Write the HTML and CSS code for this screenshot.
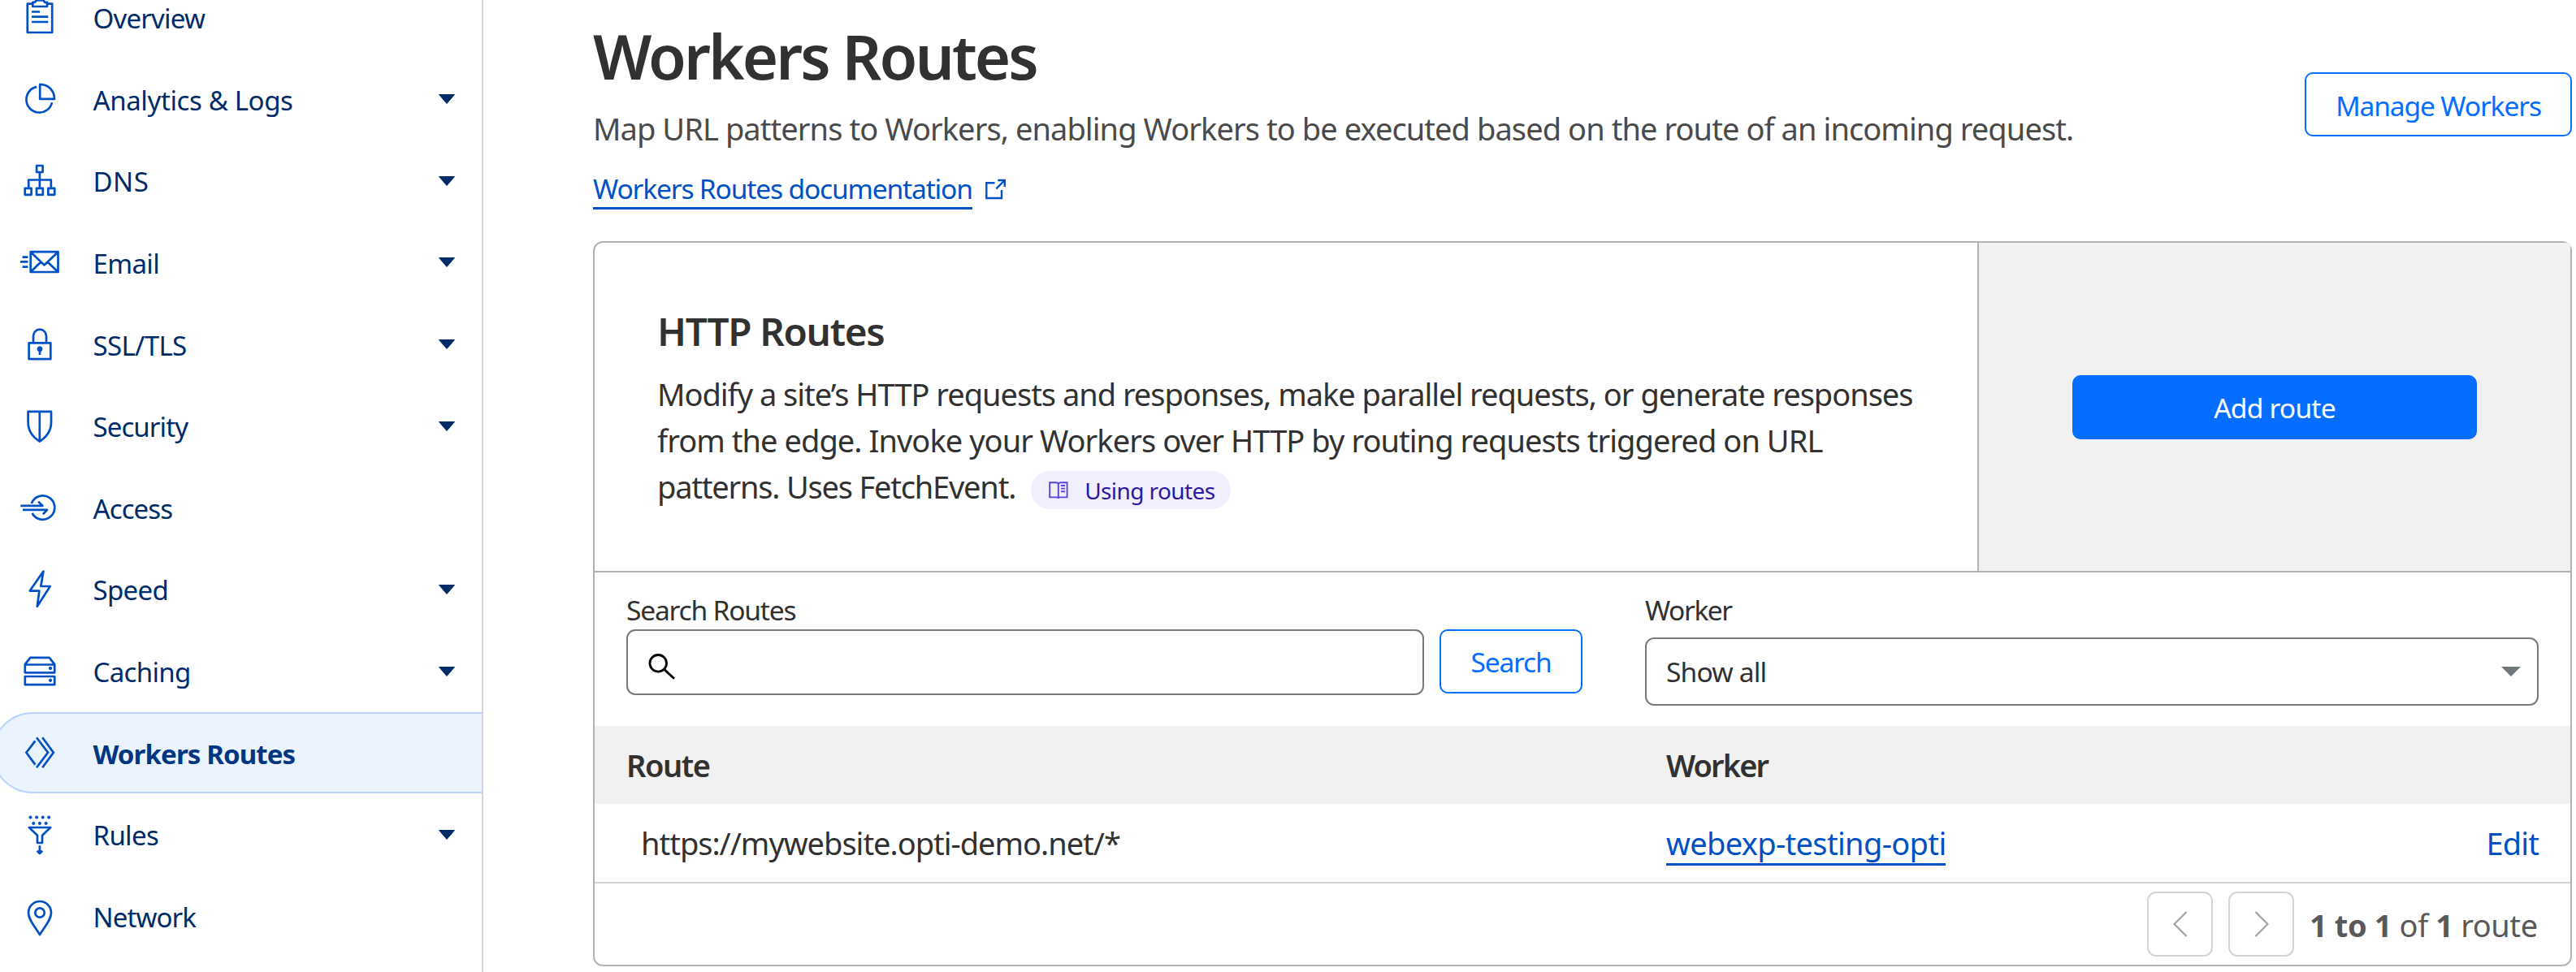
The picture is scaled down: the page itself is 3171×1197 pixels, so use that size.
FILE: index.html
```
<!DOCTYPE html>
<html lang="en">
<head>
<meta charset="utf-8">
<title>Workers Routes</title>
<link rel="stylesheet" href="styles.css">
</head>
<body>
<div class="app">
  <nav class="sidebar">
    <a class="nav-item t-overview">
      <svg class="nav-icon" viewBox="0 0 60 60"><path d="M20 12.7H14.8V48H45.2V12.7H40"/><path d="M21.3 10.8H24L25.5 8.5H34.5L36 10.8H39V16H21.3Z"/><path d="M20 22.5H30M20 28.7H40.3M20 35H40.3"/></svg>
      <span class="nav-label">Overview</span>
    </a>
    <a class="nav-item t-analytics">
      <svg class="nav-icon" viewBox="0 0 60 60"><path d="M30.2 11.8V29.9H48C48 20 41 12 30.2 11.8Z"/><path d="M26.2 14.9A16 16 0 1 0 45 34.2"/></svg>
      <span class="nav-label">Analytics &amp; Logs</span>
      <svg class="caret" viewBox="0 0 20 12"><path d="M.5.5H19.5L10 11.5Z"/></svg>
    </a>
    <a class="nav-item t-dns">
      <svg class="nav-icon" viewBox="0 0 60 60"><path d="M26.1 11H33.6V19H26.1ZM11.7 38.8H19.6V46.8H11.7ZM26 38.8H33.8V46.8H26ZM40.3 38.8H48.2V46.8H40.3ZM29.9 19V38.5M16.2 38.5V28.5H43.8V38.5"/></svg>
      <span class="nav-label">DNS</span>
      <svg class="caret" viewBox="0 0 20 12"><path d="M.5.5H19.5L10 11.5Z"/></svg>
    </a>
    <a class="nav-item t-email">
      <svg class="nav-icon" viewBox="0 0 60 60"><path d="M18.7 17.2H52.5V42H18.7ZM18.7 17.2L35.4 33.4L52.5 17.2M18.7 42L31.4 29.5M52.5 42L39.5 29.5M8.6 23.6H15.4M5.9 29.3H15.4M8.6 35.6H15.4"/></svg>
      <span class="nav-label">Email</span>
      <svg class="caret" viewBox="0 0 20 12"><path d="M.5.5H19.5L10 11.5Z"/></svg>
    </a>
    <a class="nav-item t-ssl">
      <svg class="nav-icon" viewBox="0 0 60 60"><path d="M16.6 28.3H43.3V48.2H16.6ZM22 28V20A8 8.4 0 0 1 38 20V28"/><circle class="solid" cx="30" cy="35.8" r="3"/><path d="M30 36V43"/></svg>
      <span class="nav-label">SSL/TLS</span>
      <svg class="caret" viewBox="0 0 20 12"><path d="M.5.5H19.5L10 11.5Z"/></svg>
    </a>
    <a class="nav-item t-security">
      <svg class="nav-icon" viewBox="0 0 60 60"><path d="M15.6 11.8H44V25C44 36 38.5 43 29.8 48.6C21 43 15.6 36 15.6 25ZM29.8 12V48"/></svg>
      <span class="nav-label">Security</span>
      <svg class="caret" viewBox="0 0 20 12"><path d="M.5.5H19.5L10 11.5Z"/></svg>
    </a>
    <a class="nav-item t-access">
      <svg class="nav-icon" viewBox="0 0 60 60"><path d="M19.8 25A14.7 14.7 0 1 1 20.6 37M6.3 27.9H33.4L28.1 22.8M9 32.8H39L33.9 38.4"/></svg>
      <span class="nav-label">Access</span>
    </a>
    <a class="nav-item t-speed">
      <svg class="nav-icon" viewBox="0 0 60 60"><path d="M34.4 7.5L17.8 31.6H29.4L26.8 50.8L42.7 26H31.3Z"/></svg>
      <span class="nav-label">Speed</span>
      <svg class="caret" viewBox="0 0 20 12"><path d="M.5.5H19.5L10 11.5Z"/></svg>
    </a>
    <a class="nav-item t-caching">
      <svg class="nav-icon" viewBox="0 0 60 60"><path d="M11.8 21.5H48.2V31.3H11.8ZM11.8 36H48.2V46.2H11.8ZM11.8 21.2L18.3 12.8H41.7L48.2 21.2"/><circle class="solid" cx="43" cy="26" r="1.7"/><circle class="solid" cx="43" cy="40.8" r="1.7"/></svg>
      <span class="nav-label">Caching</span>
      <svg class="caret" viewBox="0 0 20 12"><path d="M.5.5H19.5L10 11.5Z"/></svg>
    </a>
    <a class="nav-item active t-routes">
      <svg class="nav-icon miter" viewBox="0 0 60 60"><path d="M24.4 15.4L13.4 29.8L24.4 44.6M26 11.2L40 29.8L26 48.2M33.2 11.2L46.8 29.8L33.2 48.2"/></svg>
      <span class="nav-label">Workers Routes</span>
    </a>
    <a class="nav-item t-rules">
      <svg class="nav-icon" viewBox="0 0 60 60"><path d="M16.8 21H43.2L33 30.8V40H27V30.8ZM29.9 43.2V52.5M26.7 49.7L29.9 53L33.1 49.7"/><g class="solid"><circle cx="18.5" cy="8.5" r="1.6"/><circle cx="26.1" cy="8.5" r="1.6"/><circle cx="33.7" cy="8.5" r="1.6"/><circle cx="41.2" cy="8.5" r="1.6"/><circle cx="22.3" cy="15.9" r="1.6"/><circle cx="29.9" cy="15.9" r="1.6"/><circle cx="37.6" cy="15.9" r="1.6"/></g></svg>
      <span class="nav-label">Rules</span>
      <svg class="caret" viewBox="0 0 20 12"><path d="M.5.5H19.5L10 11.5Z"/></svg>
    </a>
    <a class="nav-item t-network">
      <svg class="nav-icon" viewBox="0 0 60 60"><path d="M30 53C24 43 16 35 16 26A14 14 0 0 1 44 26C44 35 36 43 30 53Z"/><circle cx="30" cy="26" r="5.7"/></svg>
      <span class="nav-label">Network</span>
    </a>
  </nav>

  <main class="main">
    <header class="page-head">
      <div>
        <h1 class="title">Workers Routes</h1>
        <p class="subtitle">Map URL patterns to Workers, enabling Workers to be executed based on the route of an incoming request.</p>
        <div class="doc-row">
          <a class="link doc-link">Workers Routes documentation</a>
          <svg class="external" viewBox="0 0 26 26"><path d="M11.5 5.3H1.3V24H20V14M15.3 2H23.8V10M23.8 2L13.3 12.3"/></svg>
        </div>
      </div>
      <button class="btn btn-outline manage">Manage Workers</button>
    </header>

    <section class="card">
      <div class="intro">
        <div class="intro-text">
          <h2 class="heading">HTTP Routes</h2>
          <p class="copy"><span class="l1">Modify a site’s HTTP requests and responses, make parallel requests, or generate responses</span><br><span class="l2">from the edge. Invoke your Workers over HTTP by routing requests triggered on URL</span><br><span class="l3">patterns. Uses FetchEvent.</span><a class="badge"><svg class="book" viewBox="0 0 24 22"><path d="M11.8 3Q11 1.2 9 1.2H1.2V19.4H9.5Q11.8 19.4 11.8 21Q11.8 19.4 14 19.4H22.6V1.2H14.5Q12.5 1.2 11.8 3ZM11.8 3V20.5M15 5H20M15 8.6H20M15 12.2H20"/></svg><span>Using routes</span></a></p>
        </div>
        <div class="intro-action">
          <button class="btn btn-primary">Add route</button>
        </div>
      </div>

      <div class="filters">
        <div class="field">
          <label class="label search-label">Search Routes</label>
          <div class="search-row">
            <div class="input">
              <svg class="magnifier" viewBox="0 0 34 32"><ellipse cx="12.2" cy="11.8" rx="10.3" ry="10.3"/><path d="M19.6 19.4L32 30.8"/></svg>
            </div>
            <button class="btn btn-outline search">Search</button>
          </div>
        </div>
        <div class="field">
          <label class="label worker-label">Worker</label>
          <div class="select"><span>Show all</span><svg class="select-arrow" viewBox="0 0 24 12"><path d="M0 0H24L12 12Z"/></svg></div>
        </div>
      </div>

      <div class="row row-head"><span class="th-route">Route</span><span class="th-worker">Worker</span></div>
      <div class="row row-body">
        <span class="url">https://mywebsite.opti-demo.net/*</span>
        <span><a class="link worker-link">webexp-testing-opti</a></span>
        <a class="edit">Edit</a>
      </div>
      <div class="pager">
        <button class="page-btn"><svg viewBox="0 0 18 32"><path d="M16.5 1L1.5 16L16.5 31"/></svg></button>
        <button class="page-btn"><svg viewBox="0 0 18 32"><path d="M1.5 1L16.5 16L1.5 31"/></svg></button>
        <span class="count"><b>1 to 1</b> of <b>1</b> route</span>
      </div>
    </section>
  </main>
</div>
</body>
</html>
```
FILE: styles.css
```
* { box-sizing: border-box; }

body {
  margin: 0;
  background: #fff;
  color: #313131;
  font-family: "Noto Sans", "Open Sans", sans-serif;
  font-size: 38px;
  overflow: hidden;
}

h1, h2, p { margin: 0; }
button { font-family: inherit; margin: 0; padding: 0; }
svg { display: block; flex: none; fill: none; }

.app { display: flex; height: 1197px; overflow: hidden; }

/* Sidebar */
.sidebar {
  flex: none;
  width: 595px;
  height: 1240px;
  margin-top: -28.8px;
  border-right: 2px solid #d5d5d5;
}
.nav-item {
  display: flex;
  align-items: center;
  height: 100.64px;
  padding: 0 33px 0 19px;
  color: #002b69;
  font-size: 33px;
}
.nav-icon {
  width: 60px;
  height: 60px;
  margin-right: 35.5px;
  stroke: #0051c3;
  stroke-width: 2.7;
  stroke-linejoin: round;
}
.nav-icon .solid { fill: #0051c3; stroke-width: 1; }
.nav-icon.miter { stroke-linejoin: miter; }
.nav-label { flex: 1; padding-top: 2px; white-space: nowrap; }
.caret { width: 20px; height: 12px; fill: #002b69; stroke: #002b69; stroke-linejoin: round; }
.nav-item.active {
  padding-left: 29px;
  margin-left: -10px;
  border: 2px solid #b6d4ff;
  border-right: 0;
  border-radius: 50px 0 0 50px;
  background: #ebf3fe;
  color: #003682;
  font-weight: 700;
}
.active .nav-icon { margin-left: -2px; }

.t-overview { letter-spacing: -.8px; }
.t-analytics { letter-spacing: -.38px; }
.t-dns { letter-spacing: .5px; }
.t-email, .t-ssl, .t-speed, .t-caching, .t-rules { letter-spacing: -.65px; }
.t-security, .t-access, .t-network { letter-spacing: -.9px; }
.t-routes { letter-spacing: -.88px; }

/* Page header */
.main { flex: none; width: 2436px; margin-left: 135px; }
.page-head { display: flex; justify-content: space-between; height: 297px; padding-top: 24px; }
.title {
  font-size: 76px;
  line-height: 90px;
  font-weight: 600;
  letter-spacing: -2.95px;
}
.subtitle { margin-top: 16px; line-height: 57px; letter-spacing: -.92px; color: #4a4a4a; white-space: nowrap; }
.doc-row { display: flex; align-items: flex-start; margin-top: 22px; gap: 16px; }
.link { display: inline-block; border-bottom: 3px solid #0051c3; color: #0051c3; white-space: nowrap; }
.doc-link { width: 467px; font-size: 33.6px; line-height: 46px; letter-spacing: -1.18px; }
.external { width: 26px; height: 26px; margin-top: 11px; stroke: #0051c3; stroke-width: 2.4; }

.btn {
  border: 0;
  border-radius: 10px;
  font-size: 33.6px;
  line-height: 40px;
  text-align: center;
  height: 79px;
  padding-top: 2px;
}
.btn-outline { border: 2.5px solid #056dff; background: #fff; color: #056dff; }
.manage { width: 329px; margin-top: 65px; letter-spacing: -1.15px; }
.btn-primary { width: 498px; background: #056dff; color: #fff; letter-spacing: -.8px; }

/* Card */
.card { height: 893px; border: 2px solid #b2b2b2; border-radius: 12px; }
.intro { display: flex; height: 406px; border-bottom: 2px solid #b2b2b2; }
.intro-text { flex: none; width: 1702px; padding: 80px 0 0 77px; }
.heading { font-size: 47.6px; line-height: 58px; font-weight: 600; letter-spacing: -1.3px; }
.copy { margin-top: 20px; line-height: 57px; white-space: nowrap; }
.l1 { letter-spacing: -1.01px; }
.l2 { letter-spacing: -.94px; }
.l3 { letter-spacing: -1.2px; }
.badge {
  display: inline-flex;
  align-items: center;
  width: 246px;
  height: 47px;
  margin-left: 19px;
  padding-left: 22px;
  border-radius: 24px;
  background: #f1effd;
  color: #2c18a3;
  font-size: 28px;
  line-height: 40px;
  letter-spacing: -.59px;
  vertical-align: middle;
}
.book { width: 24px; height: 22px; margin-right: 20px; stroke: #5746d9; stroke-width: 1.9; }
.intro-action {
  flex: 1;
  display: flex;
  align-items: center;
  justify-content: center;
  border-left: 2px solid #b2b2b2;
  background: #f1f1f1;
}

/* Filters */
.filters {
  display: grid;
  grid-template-columns: 1177px 1100px;
  gap: 77px;
  height: 189px;
  padding: 23px 39px 0;
}
.label { display: block; font-size: 33.6px; line-height: 46px; }
.search-label { letter-spacing: -1.22px; }
.worker-label { letter-spacing: -1.45px; }
.search-row { display: flex; gap: 19px; margin-top: 1px; }
.input {
  display: flex;
  align-items: center;
  width: 982px;
  height: 81px;
  padding: 10px 0 0 25px;
  border: 2px solid #797979;
  border-radius: 11px;
}
.magnifier { width: 34px; height: 32px; stroke: #000; stroke-width: 2.8; }
.search { width: 176px; padding-top: 0; letter-spacing: -1.25px; }
.select {
  display: flex;
  align-items: center;
  justify-content: space-between;
  height: 84px;
  margin-top: 11px;
  padding: 0 20px 0 24px;
  border: 2px solid #797979;
  border-radius: 11px;
  font-size: 33.6px;
  letter-spacing: -.85px;
}
.select-arrow { width: 24px; height: 12px; fill: #6f777b; }

/* Routes table */
.row {
  display: grid;
  grid-template-columns: 1280px 1fr auto;
  align-items: center;
  padding: 0 39px;
  line-height: 50px;
}
.row-head { height: 96px; background: #f1f1f1; font-weight: 600; }
.row-body { height: 98px; border-bottom: 2px solid #d5d5d5; }
.th-route { letter-spacing: -1.45px; }
.th-worker { letter-spacing: -1.9px; }
.url { padding-left: 18px; letter-spacing: -1.01px; }
.worker-link { width: 344px; margin-bottom: -3px; letter-spacing: -.65px; vertical-align: top; }
.edit { color: #0051c3; letter-spacing: -.9px; }

.pager { display: flex; align-items: center; justify-content: flex-end; height: 100px; padding-right: 39px; }
.page-btn {
  display: flex;
  align-items: center;
  justify-content: center;
  width: 81px;
  height: 80px;
  margin-right: 19px;
  border: 2px solid #d5d5d5;
  border-radius: 11px;
  background: #fff;
}
.page-btn svg { width: 18px; height: 32px; stroke: #a3a3a3; stroke-width: 2.2; }
.count { width: 282px; padding-top: 1px; color: #595959; letter-spacing: -.4px; white-space: nowrap; }
```
